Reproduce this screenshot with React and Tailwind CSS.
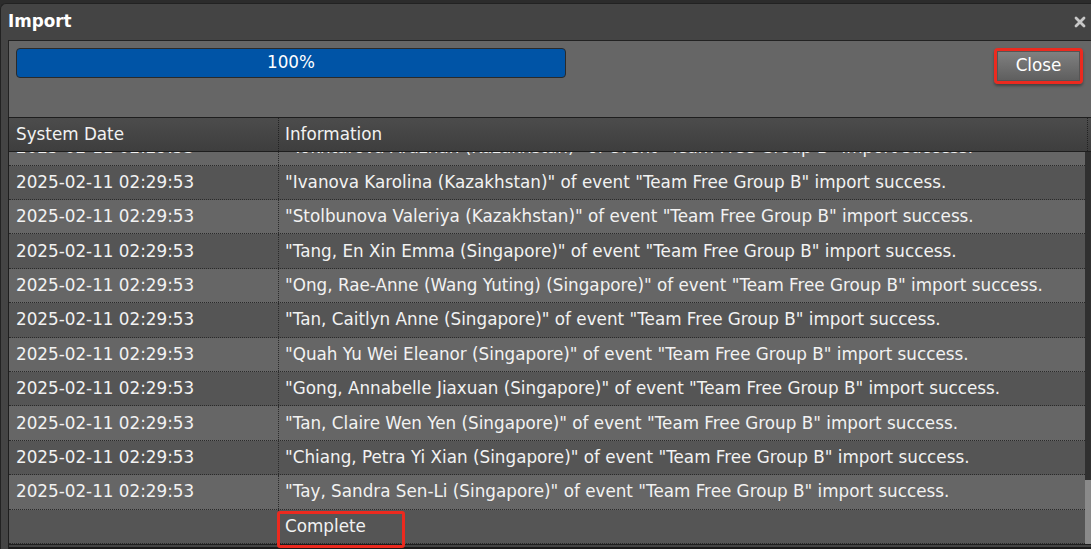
import React from 'react'

const NAMES = [
  '"Tokhtarova Aruzhan (Kazakhstan)"',
  '"Ivanova Karolina (Kazakhstan)"',
  '"Stolbunova Valeriya (Kazakhstan)"',
  '"Tang, En Xin Emma (Singapore)"',
  '"Ong, Rae-Anne (Wang Yuting) (Singapore)"',
  '"Tan, Caitlyn Anne (Singapore)"',
  '"Quah Yu Wei Eleanor (Singapore)"',
  '"Gong, Annabelle Jiaxuan (Singapore)"',
  '"Tan, Claire Wen Yen (Singapore)"',
  '"Chiang, Petra Yi Xian (Singapore)"',
  '"Tay, Sandra Sen-Li (Singapore)"',
]

const ROWS = [
  ...NAMES.map(n => ({ date: '2025-02-11 02:29:53', info: `${n} of event "Team Free Group B" import success.` })),
  { date: '', info: 'Complete', mark: true },
]

export default function App() {
  return (
    <div className="w-[1091px] h-[549px] overflow-hidden bg-[#2c2c2c] pt-[3px] text-[16.8px] text-[#f2f2f2] font-['DejaVu_Sans',Verdana,sans-serif]">
      <div className="h-[546px] flex flex-col bg-[#444] rounded-tl-[6px] border-l border-t border-[#222]">

        {/* title */}
        <div className="h-[36px] shrink-0 flex items-center justify-between pl-[7px] pr-[5px]">
          <span className="font-bold text-white">Import</span>
          <svg width="12" height="12" viewBox="0 0 12 12" className="text-[#c8c8c8]">
            <path d="M2 2 L10 10 M10 2 L2 10" stroke="currentColor" strokeWidth="2.8" strokeLinecap="round" />
          </svg>
        </div>

        <div className="flex-1 flex flex-col pl-[7px] min-h-0">
          {/* progress panel */}
          <div className="h-[77px] shrink-0 bg-[#666] border-l border-t border-[#222] flex justify-between pl-[7px] pr-[8px] pt-[7px]">
            <div className="w-[550px] h-[30px] rounded-[4px] border border-[#2a2a2a] bg-[#0054a6] flex items-center justify-center text-white">
              100%
            </div>
            <div className="w-[89px] h-[36px] rounded-[4px] border-[3px] border-[#ec2a1f] shadow-[0_2px_3px_rgba(0,0,0,0.35)]">
              <div className="w-full h-full bg-gradient-to-b from-[#808080] to-[#5f5f5f] border border-[#555] flex items-center justify-center text-white">
                Close
              </div>
            </div>
          </div>

          {/* table */}
          <div className="flex-1 min-h-0 flex flex-col bg-[#555] border-l border-t border-[#1e1e1e]">
            <div className="h-[34px] shrink-0 flex bg-gradient-to-b from-[#4c4c4c] to-[#3e3e3e] border-b border-[#1e1e1e]">
              <div className="w-[270px] shrink-0 border-r border-dotted border-[#222] px-[7px] flex items-center">System Date</div>
              <div className="flex-1 px-[6px] flex items-center border-r border-dotted border-[#222] mr-[3px]">Information</div>
            </div>
            <div className="flex-1 min-h-0 flex">
              <div className="flex-1 min-w-0 flex flex-col justify-end [clip-path:inset(0_-20px_-20px_0)] relative z-10">
                {ROWS.map((r, i) => {
                  const dark = (ROWS.length - 1 - i) % 2 === 0
                  return (
                    <div
                      key={i}
                      className={`h-[34.4px] shrink-0 flex border-b border-dotted border-[#2a2a2a] ${dark ? 'bg-[#555]' : 'bg-[#666]'}`}
                    >
                      <div className="w-[270px] shrink-0 border-r border-dotted border-[#2a2a2a] px-[7px] flex items-center whitespace-nowrap">{r.date}</div>
                      <div className="relative flex-1 px-[6px] flex items-center whitespace-nowrap">
                        {r.info}
                        {r.mark && (
                          <div className="absolute left-[-2px] top-[1px] w-[128px] h-[37px] rounded-[3px] border-[3px] border-[#ec2a1f]" />
                        )}
                      </div>
                    </div>
                  )
                })}
              </div>
              <div className="w-[6px] shrink-0 flex flex-col bg-[#303030]">
                <div className="flex-1" />
                <div className="h-[64px] bg-[#8a8a8a]" />
              </div>
            </div>
            <div className="h-[5px] shrink-0 bg-[#444] border-t border-[#1e1e1e] border-b-2 border-b-[#1a1a1a]" />
          </div>
        </div>
      </div>
    </div>
  )
}
